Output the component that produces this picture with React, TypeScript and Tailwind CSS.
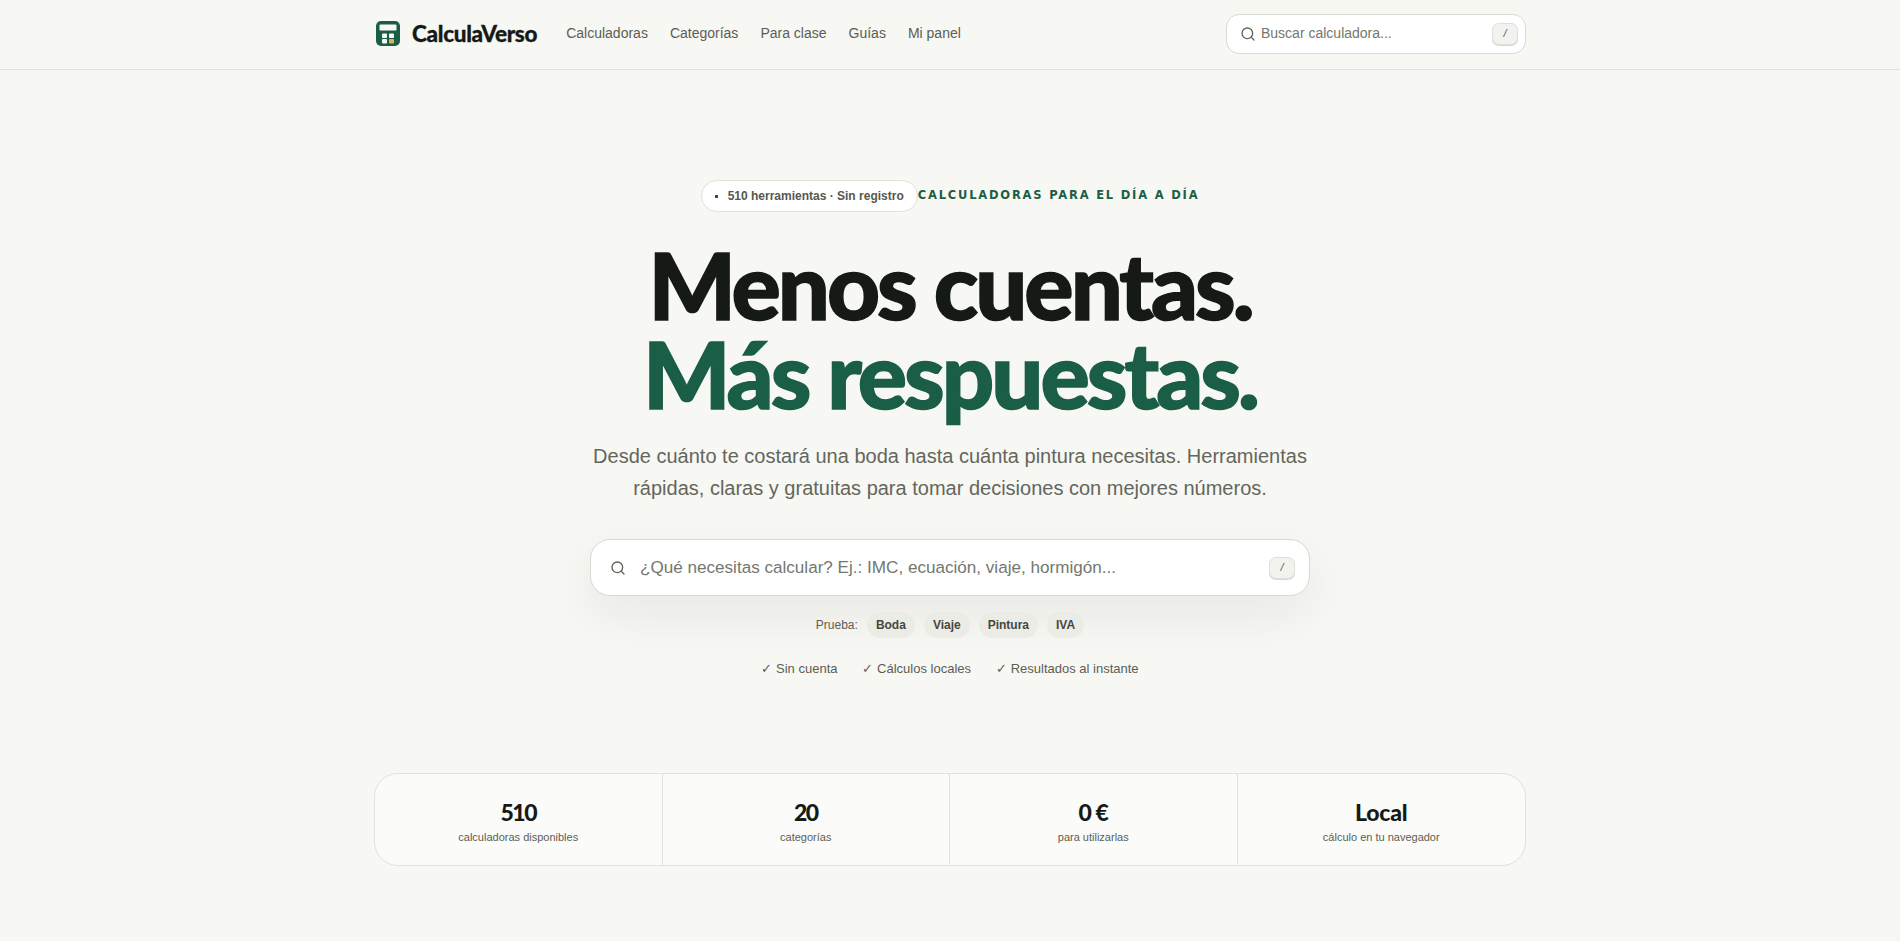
import { Search } from "lucide-react";

const sans = "font-['Liberation_Sans',Arial,sans-serif]";
const display = "font-['Lato',sans-serif]";

function Logo() {
  return (
    <svg width="24" height="25" viewBox="0 0 24 25" className="ml-[2px] shrink-0">
      <rect x="0" y="0" width="24" height="25" rx="5" fill="#1b5e47" />
      <rect x="3.5" y="3.5" width="17" height="6" rx="1" fill="#f7f7f3" />
      <rect x="6" y="12.5" width="5" height="4.5" rx="0.8" fill="#f7f7f3" />
      <rect x="13" y="12.5" width="5" height="4.5" rx="0.8" fill="#f7f7f3" />
      <rect x="6" y="18" width="5" height="4.5" rx="0.8" fill="#f7f7f3" />
      <rect x="13" y="18" width="5" height="4.5" rx="0.8" fill="#d9b45c" />
    </svg>
  );
}

function Kbd() {
  return (
    <span className="flex h-[22px] w-[26px] items-center justify-center rounded-[7px] border border-[#e0e0da] bg-[#f2f2ee] text-[11px] text-[#55584f] italic shadow-[0_1px_0_#d9d9d3]">
      /
    </span>
  );
}

const stats = [
  ["510", "calculadoras disponibles", "tracking-[-1.5px]"],
  ["20", "categorías", "tracking-[-1.5px]"],
  ["0 €", "para utilizarlas", "tracking-[-0.8px]"],
  ["Local", "cálculo en tu navegador", "tracking-[-0.2px]"],
];

export default function App() {
  return (
    <div className={`${sans} min-h-[941px] overflow-hidden bg-[#f7f7f3] text-[#161a16]`}>
      <header className="h-[70px] border-b border-[#e2e2dc]">
        <div className="mx-auto flex h-[67px] w-[1152px] items-center">
          <div className="flex items-center gap-[12px]">
            <Logo />
            <span className={`${display} text-[22.5px] font-black tracking-[-0.3px] [-webkit-text-stroke:0.3px]`}>CalculaVerso</span>
          </div>
          <nav className="ml-[29px] flex gap-[22px] text-[14px] text-[#5b5e56]">
            <span>Calculadoras</span>
            <span>Categorías</span>
            <span>Para clase</span>
            <span>Guías</span>
            <span>Mi panel</span>
          </nav>
          <div className="ml-auto flex h-[40px] w-[300px] items-center rounded-[13px] border border-[#d9d9d3] bg-white pl-[13px] pr-[7px]">
            <Search size={16} strokeWidth={2} className="text-[#60635b]" />
            <span className="ml-[5px] flex-1 text-[14px] text-[#74776f]">Buscar calculadora...</span>
            <Kbd />
          </div>
        </div>
      </header>

      <main className="mx-auto w-[1152px]">
        <section className="flex flex-col items-center pt-[110px]">
          <div className="flex items-center">
            <span className="flex h-[32px] items-center rounded-full border border-[#e2e2dc] bg-white pl-[13px] pr-[13px] text-[12px] font-bold text-[#55584f]">
              <span className="mr-[10px] h-[3px] w-[3px] bg-[#1b5e47]" />
              510 herramientas · Sin registro
            </span>
            <span className="font-['DejaVu_Sans',sans-serif] text-[11.5px] font-bold tracking-[1.8px] text-[#1b5e47]">CALCULADORAS PARA EL DÍA A DÍA</span>
          </div>
          <h1 className={`${display} mt-[28px] text-center text-[92px] leading-[89px] font-black tracking-[-3px] [-webkit-text-stroke:1.5px]`}>
            <span className="block">Menos cuentas.</span>
            <span className="block text-[#1b5e47]">Más respuestas.</span>
          </h1>
          <p className="mt-[22px] text-center text-[20px] leading-[32px] text-[#63665e]">
            Desde cuánto te costará una boda hasta cuánta pintura necesitas. Herramientas
            <br />
            rápidas, claras y gratuitas para tomar decisiones con mejores números.
          </p>
          <div className="mt-[35px] flex h-[57px] w-[720px] items-center rounded-[20px] border border-[#d9d9d3] bg-white pl-[19px] pr-[14px] shadow-[0_18px_50px_rgba(22,26,22,0.07)]">
            <Search size={16} strokeWidth={2} className="text-[#60635b]" />
            <span className="ml-[14px] flex-1 text-[17.1px] text-[#74776f]">¿Qué necesitas calcular? Ej.: IMC, ecuación, viaje, hormigón...</span>
            <Kbd />
          </div>
          <div className="mt-[16px] flex items-center gap-[9px] text-[12px] text-[#5b5e56]">
            <span>Prueba:</span>
            {["Boda", "Viaje", "Pintura", "IVA"].map((t) => (
              <span key={t} className="flex h-[26px] items-center rounded-full bg-[#ecece7] px-[9px] font-bold text-[#44473f]">
                {t}
              </span>
            ))}
          </div>
          <div className="mt-[21px] flex gap-[25px] text-[13px] text-[#5b5e56]">
            <span>✓ Sin cuenta</span>
            <span>✓ Cálculos locales</span>
            <span>✓ Resultados al instante</span>
          </div>
        </section>

        <section className="mt-[94px] grid h-[93px] grid-cols-4 rounded-[24px] border border-[#e2e2dc] bg-[#fbfbf9]">
          {stats.map(([n, l, t], i) => (
            <div key={n} className={`flex flex-col items-center justify-center pt-[5px] ${i < 3 ? "border-r border-[#e2e2dc]" : ""}`}>
              <span className={`${display} text-[23px] leading-[28px] font-black text-[#161a16] ${t}`}>{n}</span>
              <span className="mt-[3px] text-[11px] leading-[16px] text-[#5b5e56]">{l}</span>
            </div>
          ))}
        </section>
      </main>
    </div>
  );
}
